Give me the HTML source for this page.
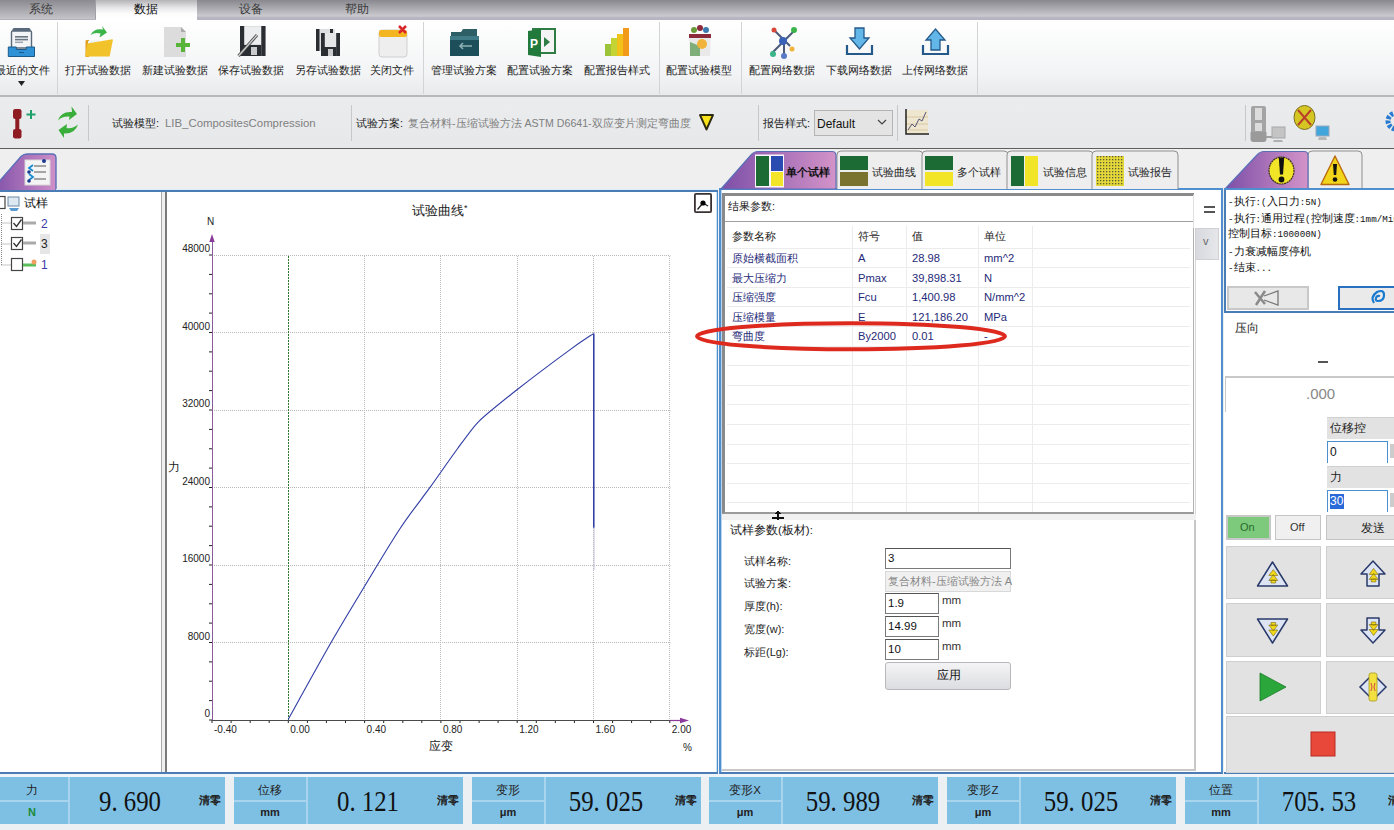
<!DOCTYPE html><html><head><meta charset="utf-8">
<style>
*{margin:0;padding:0;box-sizing:border-box}
html,body{width:1394px;height:830px;overflow:hidden;background:#efefef;font-family:"Liberation Sans",sans-serif;color:#222}
.a{position:absolute}
.t{position:absolute;white-space:nowrap;line-height:1}
#topbar{left:0;top:0;width:1394px;height:20px;background:linear-gradient(#88888e,#c9c9ce 80%,#b8b6c2 88%,#b4b2be)}
#ribbon{left:0;top:20px;width:1394px;height:77px;background:linear-gradient(#ffffff,#f3f4f5 70%,#e9eaec);border-bottom:2px solid #b9b9bb}
.sep{position:absolute;width:1px;background:#d4d4d6}
.rl{position:absolute;top:43px;font-size:11px;color:#222;white-space:nowrap;line-height:14px;transform:translateX(-50%)}
#tb2{left:0;top:97px;width:1394px;height:52px;background:linear-gradient(#eaecee,#e6e8ea);border-bottom:1px solid #5e5e5e;box-shadow:0 1px 0 #f4eed6}
#tabstrip{left:0;top:149px;width:1394px;height:42px;background:#efefef}
.j{display:inline-block;white-space:nowrap;text-align:justify;text-align-last:justify}
</style></head><body>
<div id="topbar" class="a">
  <div class="a" style="left:0;top:0;width:96px;height:19px;background:linear-gradient(#8a8a90,#c4c4c9);border-right:1px solid #a0a0a6"></div>
  <div class="a" style="left:96px;top:0;width:101px;height:20px;background:linear-gradient(#b4b4b8,#e8e8ea 40%,#fdfdfd 70%,#ffffff)"></div>
  <div class="t" style="left:29px;top:3px;font-size:12px;color:#3a3a3a"><span class="j" style="width: 24px;">系统</span></div>
  <div class="t" style="left:134px;top:3px;font-size:12px;color:#111"><span class="j" style="width: 24px;">数据</span></div>
  <div class="t" style="left:239px;top:3px;font-size:12px;color:#3a3a3a"><span class="j" style="width: 24px;">设备</span></div>
  <div class="t" style="left:345px;top:3px;font-size:12px;color:#3a3a3a"><span class="j" style="width: 24px;">帮助</span></div>
</div>
<div id="ribbon" class="a">
  <div class="sep" style="left:57px;top:2px;height:72px"></div>
  <div class="sep" style="left:423px;top:2px;height:72px"></div>
  <div class="sep" style="left:659px;top:2px;height:72px"></div>
  <div class="sep" style="left:741px;top:2px;height:72px"></div>
  <div class="sep" style="left:977px;top:2px;height:72px"></div>
  <!-- icons -->
  <svg class="a" style="left:0;top:0" width="980" height="45" viewBox="0 20 980 45">
    <!-- recent files tray -->
    <rect x="12.5" y="28" width="18" height="4" rx="1.5" fill="#5a6a7c"></rect>
    <rect x="11.5" y="31" width="20" height="17" rx="1" fill="#f2f4f6" stroke="#5a6a7c" stroke-width="1.4"></rect>
    <rect x="15" y="36" width="13" height="1.6" fill="#6a7682"></rect><rect x="15" y="38.8" width="13" height="1.6" fill="#6a7682"></rect><rect x="15" y="41.6" width="8" height="1.4" fill="#9aa4ae"></rect>
    <path d="M8.3 47 h8 v2.5 h10 v-2.5 h8.2 v9.5 h-26.2z" fill="#2f92d6" stroke="#1a5a8a" stroke-width="1"></path>
    <rect x="19" y="52" width="5" height="1" fill="#1a5a8a"></rect>
    <!-- open folder -->
    <path d="M85.5 41 q0 -1 1.5 -1 h2 v17 h-3.5z" fill="#e0a020"></path>
    <path d="M88 41 l12 -1 l-4 6 h-8z" fill="#eef2f6"></path>
    <path d="M87.3 43.6 L112.4 39.2 Q113 39.5 112.8 40.5 L109.6 56.6 H86.5 Q85.3 56.6 85.3 55.5z" fill="#f2c22a"></path>
    <path d="M90.5 35 Q94 28 103 29.5 L102 26 L107 32.5 L99.5 37.5 L100.5 33.5 Q95 32 90.5 35z" fill="#3cb54a"></path>
    <!-- new doc -->
    <path d="M164 27 h17 l5 5 v25 h-22z" fill="#dcdcdc"></path>
    <path d="M181 27 v5 h5z" fill="#aaa"></path>
    <rect x="176" y="43" width="14" height="4" fill="#59b43a"></rect><rect x="181" y="38" width="4" height="14" fill="#59b43a"></rect>
    <!-- save floppy -->
    <rect x="240" y="26" width="26" height="30" fill="#dcdee0"></rect>
    <rect x="244" y="27" width="17" height="17" fill="#eceeef"></rect>
    <rect x="240" y="26" width="4.2" height="30" fill="#2a2d31"></rect>
    <rect x="261.3" y="26" width="4.2" height="30" fill="#2a2d31"></rect>
    <rect x="244" y="45" width="17.3" height="11" fill="#2a2d31"></rect>
    <rect x="251" y="47" width="6" height="8" fill="#c8cacc"></rect>
    <path d="M238.5 56 L257 35" stroke="#444" stroke-width="3"></path>
    <path d="M238.5 56 L257 35" stroke="#c8c8c8" stroke-width="1.6"></path>
    <!-- save as -->
    <rect x="316" y="29" width="19" height="22" fill="#dcdee0"></rect>
    <rect x="316" y="29" width="3.5" height="22" fill="#2a2d31"></rect>
    <rect x="330" y="29" width="3" height="5" fill="#2a2d31"></rect>
    <rect x="321" y="33" width="19" height="23" fill="#e4e6e8"></rect>
    <rect x="321" y="33" width="3.8" height="23" fill="#2a2d31"></rect>
    <rect x="336.2" y="33" width="3.8" height="23" fill="#2a2d31"></rect>
    <rect x="324" y="47" width="12.5" height="9" fill="#2a2d31"></rect>
    <rect x="328" y="49" width="5" height="7" fill="#c8cacc"></rect>
    <!-- close file -->
    <rect x="379" y="30" width="28" height="27" rx="3" fill="#eeeeee" stroke="#cfcfcf"></rect>
    <rect x="379" y="30" width="28" height="7" rx="2" fill="#f3b520"></rect>
    <path d="M399 26 l7 7 M406 26 l-7 7" stroke="#d9262b" stroke-width="2.5"></path>
    <!-- manage scheme folder -->
    <path d="M451 32 h10 l2 -3 h14 v27 h-26z" fill="#2f5f66"></path>
    <path d="M450 36 h29 v20 h-29z" fill="#1c4f5a"></path>
    <rect x="450" y="36" width="29" height="4" fill="#3f7a86"></rect>
    <path d="M460 46 h12 M463 43 l-3 3 3 3" stroke="#8fb0b4" stroke-width="1.5" fill="none"></path>
    <!-- config scheme (project) -->
    <rect x="533" y="29" width="22" height="24" fill="#f4f4f4" stroke="#2f7d44" stroke-width="2"></rect>
    <path d="M528 31 l13 -2 v28 l-13 -2z" fill="#217a3c"></path>
    <text x="530" y="48" font-size="12" font-weight="bold" fill="#fff" font-family="Liberation Sans">P</text>
    <path d="M544 37 l6 5 -6 5z" fill="#2f7d44"></path>
    <!-- report style bars -->
    <rect x="605" y="44" width="6" height="12" fill="#9dc33b"></rect>
    <rect x="611" y="38" width="6" height="18" fill="#c5d435"></rect>
    <rect x="617" y="34" width="6" height="22" fill="#f2c21a"></rect>
    <rect x="623" y="28" width="6" height="28" fill="#f29a19"></rect>
    <!-- model bag -->
    <path d="M689 34 h22 l-1 22 h-20z" fill="#e9e9e9"></path>
    <path d="M689 34 h22 v4 h-22z" fill="#8b2a3a"></path>
    <circle cx="694" cy="30" r="3" fill="#6a9a3a"></circle><circle cx="700" cy="28" r="3" fill="#8b2a3a"></circle><circle cx="706" cy="30" r="3" fill="#3a7ab0"></circle>
    <path d="M690 42 l10 4 v10 h-10z" fill="#7fae7a"></path>
    <circle cx="702" cy="44" r="5" fill="#f2b33a"></circle>
    <!-- network -->
    <path d="M772 53 l22 -22 M775 31 l15 15 M784 41 l0 15" stroke="#4a5a78" stroke-width="2"></path>
    <circle cx="783" cy="41" r="4" fill="#3a63b8"></circle>
    <circle cx="794" cy="30" r="3" fill="#3cb44a"></circle><circle cx="774" cy="30" r="2.5" fill="#d9473a"></circle>
    <circle cx="773" cy="54" r="3" fill="#3cb48a"></circle><circle cx="784" cy="56" r="3" fill="#5a7ac8"></circle><circle cx="792" cy="49" r="2.5" fill="#f2b33a"></circle>
    <!-- download -->
    <path d="M847 45 v9 h25 v-9" stroke="#24598a" stroke-width="2.2" fill="none"></path>
    <path d="M855 28 h9 v10 h5 l-9.5 11 -9.5 -11 h5z" fill="#62b6e8" stroke="#24598a" stroke-width="1.3"></path>
    <!-- upload -->
    <path d="M923 45 v9 h25 v-9" stroke="#24598a" stroke-width="2.2" fill="none"></path>
    <path d="M931 50 h9 v-10 h5 l-9.5 -11 -9.5 11 h5z" fill="#62b6e8" stroke="#24598a" stroke-width="1.3"></path>
  </svg>
  <div class="rl" style="left:22px"><span class="j" style="width: 55px;">最近的文件</span></div>
  <svg class="a" style="left:18px;top:61px" width="8" height="6"><path d="M0 0h7l-3.5 5z" fill="#222"></path></svg>
  <div class="rl" style="left:98px"><span class="j" style="width: 66px;">打开试验数据</span></div>
  <div class="rl" style="left:175px"><span class="j" style="width: 66px;">新建试验数据</span></div>
  <div class="rl" style="left:251px"><span class="j" style="width: 66px;">保存试验数据</span></div>
  <div class="rl" style="left:328px"><span class="j" style="width: 66px;">另存试验数据</span></div>
  <div class="rl" style="left:392px"><span class="j" style="width: 44px;">关闭文件</span></div>
  <div class="rl" style="left:464px"><span class="j" style="width: 66px;">管理试验方案</span></div>
  <div class="rl" style="left:540px"><span class="j" style="width: 66px;">配置试验方案</span></div>
  <div class="rl" style="left:617px"><span class="j" style="width: 66px;">配置报告样式</span></div>
  <div class="rl" style="left:699px"><span class="j" style="width: 66px;">配置试验模型</span></div>
  <div class="rl" style="left:782px"><span class="j" style="width: 66px;">配置网络数据</span></div>
  <div class="rl" style="left:859px"><span class="j" style="width: 66px;">下载网络数据</span></div>
  <div class="rl" style="left:935px"><span class="j" style="width: 66px;">上传网络数据</span></div>
</div>
<div id="tb2" class="a">
  <svg class="a" style="left:0;top:0" width="100" height="50">
    <rect x="13" y="12" width="8.5" height="10" rx="2.2" fill="#8e1c22"></rect>
    <rect x="15.3" y="19" width="4" height="16" fill="#8e1c22"></rect>
    <rect x="13" y="32" width="8.5" height="9.5" rx="2.2" fill="#8e1c22"></rect>
    <path d="M26.5 17.5 h9 M31 13 v9" stroke="#1fa26a" stroke-width="2"></path>
    <path d="M58 23.5 Q61 14 72 15 L71.5 9.5 L77 17 L69 23 L69.5 19.5 Q62 19 58 23.5z" fill="#3aae3a"></path>
    <path d="M78 27.5 Q75 37 64 36.5 L64 41 L58.5 33 L67 27 L66.5 31 Q73 32 78 27.5z" fill="#3aae3a"></path>
  </svg>
  <div class="sep" style="left:88px;top:8px;height:36px;background:#c8c8c8"></div>
  <div class="t" style="left:112px;top:21px;font-size:11px;color:#222"><span class="j" style="width: 47.1px;">试验模型:</span></div>
  <div class="t" style="left:165px;top:21px;font-size:11.4px;color:#808080">LIB_CompositesCompression</div>
  <div class="sep" style="left:351px;top:8px;height:36px;background:#c8c8c8"></div>
  <div class="t" style="left:356px;top:21px;font-size:11px;color:#222"><span class="j" style="width: 47.1px;">试验方案:</span></div>
  <div class="t" style="left:408px;top:21px;font-size:10.6px;color:#808080"><span class="j" style="width: 282.6px;">复合材料-压缩试验方法 ASTM D6641-双应变片测定弯曲度</span></div>
  <svg class="a" style="left:698px;top:16px" width="16" height="18"><path d="M2 2 h13 l-6.5 14.5z" fill="#f8e418" stroke="#2e2a14" stroke-width="1.9" stroke-linejoin="round"></path></svg>
  <div class="sep" style="left:758px;top:8px;height:36px;background:#c8c8c8"></div>
  <div class="t" style="left:763px;top:21px;font-size:11px;color:#222"><span class="j" style="width: 47.1px;">报告样式:</span></div>
  <div class="a" style="left:814px;top:13px;width:79px;height:26px;background:#e4e4e4;border:1px solid #b4b4b4"></div>
  <div class="t" style="left:817px;top:21px;font-size:12px;color:#111">Default</div>
  <svg class="a" style="left:877px;top:22px" width="10" height="7"><path d="M1 1 l4 4 4 -4" stroke="#444" stroke-width="1.2" fill="none"></path></svg>
  <div class="sep" style="left:897px;top:8px;height:36px;background:#c8c8c8"></div>
  <svg class="a" style="left:902px;top:11px" width="28" height="28">
    <rect x="3" y="2" width="23" height="24" fill="#efe6cf"></rect>
    <path d="M3 9 h23 M3 16 h23 M3 22 h23" stroke="#d8c8a8" stroke-width="1"></path>
    <path d="M4 1 v25 h23" stroke="#222" stroke-width="1.5" fill="none"></path>
    <path d="M6 22 l4 -6 3 3 4 -8 3 2 4 -9" stroke="#557" stroke-width="1" fill="none"></path>
  </svg>
  <div class="sep" style="left:1245px;top:8px;height:36px;background:#c8c8c8"></div>
  <svg class="a" style="left:1248px;top:6px" width="150" height="42">
    <path d="M3 5 q0 -2 2 -2 h11 q2 0 2 2 v26 h-15z" fill="#a4a4a4"></path>
    <path d="M2.5 29 h16 v7 q0 3 -3 3 h-10 q-3 0 -3 -3z" fill="#9a9a9a"></path>
    <rect x="7" y="5" width="7" height="12" fill="#dcdcdc"></rect><rect x="7" y="20" width="7" height="8" fill="#dcdcdc"></rect>
    <path d="M18 34 h7" stroke="#a0a0a0" stroke-width="2"></path>
    <rect x="24" y="24" width="13" height="11" fill="#c4c4c4" stroke="#a8a8a8"></rect>
    <path d="M26 37 h8 l1 2 h-10z" fill="#b0b0b0"></path>
    <ellipse cx="56.5" cy="14.5" rx="10.5" ry="12" fill="#d6c624" stroke="#7a7020" stroke-width="1"></ellipse>
    <path d="M50 7 l13 15 M63 7 l-13 15" stroke="#b8402a" stroke-width="2"></path>
    <rect x="68" y="23" width="13" height="10" fill="#42a6dc" stroke="#9ab"></rect>
    <path d="M71 34 h7 l1 3 h-9z" fill="#b8b8b8"></path>
    <circle cx="148" cy="18" r="8" fill="none" stroke="#2a7ad0" stroke-width="5" stroke-dasharray="3 1.5"></circle>
  </svg>
</div>
<div id="tabstrip" class="a"></div>
<!-- left purple tab -->
<svg class="a" style="left:0;top:152px" width="60" height="40">
  <defs><linearGradient id="pg" x1="0" x2="1" y1="0" y2="0"><stop offset="0" stop-color="#7d4fa8"></stop><stop offset="1" stop-color="#cf8fc8"></stop></linearGradient></defs>
  <path d="M-10 40 L21 4.5 Q24 2 27 2 L52 2 Q56 2 56 6 L56 40z" fill="url(#pg)" stroke="#5a6fb8" stroke-width="1.4"></path>
  <rect x="25" y="8" width="25" height="25" fill="#f4f4f4" stroke="#d8d8d8"></rect>
  <path d="M34 14 h12 M34 20 h12 M34 27 h12" stroke="#8a8a8a" stroke-width="1.5"></path>
  <path d="M33 13 l-4 3 4 3 M29 22 l4 3 -4 3" stroke="#1a8ad0" stroke-width="1.8" fill="none"></path>
  <circle cx="29" cy="20" r="1.8" fill="#1a3a90"></circle><circle cx="29" cy="29" r="1.8" fill="#1a3a90"></circle><circle cx="44" cy="9" r="2" fill="#1a3a90"></circle>
</svg>
<div class="a" style="left:0;top:190px;width:164px;height:2px;background:#4a7db5"></div>
<!-- left tree panel -->
<div class="a" style="left:0;top:192px;width:162px;height:581px;background:#fff;border-right:1px solid #a8a8a8"></div>
<!-- chart panel -->
<div class="a" style="left:56px;top:189px;width:662px;height:1px;background:#dcecf8"></div><div class="a" style="left:56px;top:190px;width:662px;height:2px;background:#4a7db5"></div>
<div class="a" style="left:165px;top:192px;width:553px;height:581px;background:#fff;border-left:2px solid #7a7a7a;border-right:1.5px solid #4f8fd0;box-shadow:inset -1px 0 0 #c8e0f4"></div>
<div class="a" style="left:0;top:772px;width:718px;height:2px;background:#4a7db5"></div>
<!-- tree -->
<svg class="a" style="left:0;top:192px" width="60" height="85">
  <rect x="-6" y="4.5" width="11" height="12" fill="#fff" stroke="#444" stroke-width="1.2"></rect>
  <rect x="8" y="5" width="11" height="9" fill="#dde8f0" stroke="#6a8aa8"></rect>
  <path d="M9 16 h10 l-2 3 h-6z" fill="#5a9ad0"></path>
  <path d="M1.5 22 V73 M1.5 31 H11 M1.5 52 H11 M1.5 73 H11" stroke="#888" stroke-width="1" stroke-dasharray="1 1"></path>
  <rect x="11.5" y="25.5" width="11" height="12" fill="#fff" stroke="#444" stroke-width="1.2"></rect>
  <path d="M13.5 31 l3 3.5 5 -7" stroke="#333" stroke-width="1.3" fill="none"></path>
  <rect x="11.5" y="45.5" width="11" height="12" fill="#fff" stroke="#444" stroke-width="1.2"></rect>
  <path d="M13.5 51 l3 3.5 5 -7" stroke="#333" stroke-width="1.3" fill="none"></path>
  <rect x="11.5" y="66.5" width="11" height="12" fill="#fff" stroke="#444" stroke-width="1.2"></rect>
  <path d="M23 31 h13 M23 51 h13" stroke="#aaa" stroke-width="3"></path>
  <path d="M23 73 h13" stroke="#5abf5a" stroke-width="3"></path>
  <circle cx="34" cy="70" r="2.5" fill="#f0a060"></circle>
  <rect x="40" y="42" width="10" height="20" fill="#e6e6e6"></rect>
</svg>
<div class="t" style="left:24px;top:197px;font-size:12px;color:#111"><span class="j" style="width: 24px;">试样</span></div>
<div class="t" style="left:41px;top:218px;font-size:12px;color:#3a3aa8">2</div>
<div class="t" style="left:41px;top:238px;font-size:12px;color:#222">3</div>
<div class="t" style="left:41px;top:259px;font-size:12px;color:#3a3aa8">1</div>
<!-- chart --><svg class="a" style="left:0;top:0" width="720" height="780"><path d="M212 642.5 H670.5" stroke="#b8b8b8" stroke-width="1" stroke-dasharray="1 1"></path><path d="M212 565.5 H670.5" stroke="#b8b8b8" stroke-width="1" stroke-dasharray="1 1"></path><path d="M212 487.5 H670.5" stroke="#b8b8b8" stroke-width="1" stroke-dasharray="1 1"></path><path d="M212 410.5 H670.5" stroke="#b8b8b8" stroke-width="1" stroke-dasharray="1 1"></path><path d="M212 332.5 H670.5" stroke="#b8b8b8" stroke-width="1" stroke-dasharray="1 1"></path><path d="M212 255.5 H670.5" stroke="#b8b8b8" stroke-width="1" stroke-dasharray="1 1"></path><path d="M364.5 256 V720" stroke="#b8b8b8" stroke-width="1" stroke-dasharray="1 1"></path><path d="M440.5 256 V720" stroke="#b8b8b8" stroke-width="1" stroke-dasharray="1 1"></path><path d="M517.5 256 V720" stroke="#b8b8b8" stroke-width="1" stroke-dasharray="1 1"></path><path d="M593.5 256 V720" stroke="#b8b8b8" stroke-width="1" stroke-dasharray="1 1"></path><path d="M669.5 256 V720" stroke="#b8b8b8" stroke-width="1" stroke-dasharray="1 1"></path><path d="M288.5 256 V720" stroke="#2f7a2f" stroke-width="1" stroke-dasharray="2 1"></path><path d="M209 720.0h3 M209 700.6h3 M209 681.2h3 M209 661.9h3 M209 642.5h3 M209 623.1h3 M209 603.8h3 M209 584.4h3 M209 565.0h3 M209 545.6h3 M209 526.2h3 M209 506.9h3 M209 487.5h3 M209 468.1h3 M209 448.8h3 M209 429.4h3 M209 410.0h3 M209 390.6h3 M209 371.2h3 M209 351.9h3 M209 332.5h3 M209 313.1h3 M209 293.8h3 M209 274.4h3 M209 255.0h3 M212.0 720v3 M231.1 720v3 M250.2 720v3 M269.2 720v3 M288.3 720v3 M307.4 720v3 M326.4 720v3 M345.5 720v3 M364.6 720v3 M383.7 720v3 M402.8 720v3 M421.8 720v3 M440.9 720v3 M460.0 720v3 M479.1 720v3 M498.1 720v3 M517.2 720v3 M536.3 720v3 M555.3 720v3 M574.4 720v3 M593.5 720v3 M612.6 720v3 M631.6 720v3 M650.7 720v3 M669.8 720v3" stroke="#222" stroke-width="1"></path><path d="M212.5 720 V238" stroke="#8a5a9a" stroke-width="1"></path><path d="M209.3 242 L212 234 L214.7 242z" fill="#8a3a9a"></path><path d="M212 720.5 H670" stroke="#4a4a4a" stroke-width="1.2"></path><path d="M670 720.5 H682" stroke="#8a3a9a" stroke-width="1.2"></path><path d="M680 717.8 L689 720.5 L680 723.2z" fill="#8a3a9a"></path><g font-family="Liberation Sans" font-size="10" fill="#222"><text x="210" y="717.0" text-anchor="end">0</text><text x="210" y="639.5" text-anchor="end">8000</text><text x="210" y="562.0" text-anchor="end">16000</text><text x="210" y="484.5" text-anchor="end">24000</text><text x="210" y="407.0" text-anchor="end">32000</text><text x="210" y="329.5" text-anchor="end">40000</text><text x="210" y="252.0" text-anchor="end">48000</text><text x="214.0" y="733">-0.40</text><text x="290.3" y="733">0.00</text><text x="366.6" y="733">0.40</text><text x="442.9" y="733">0.80</text><text x="519.2" y="733">1.20</text><text x="595.5" y="733">1.60</text><text x="671.8" y="733">2.00</text><text x="207" y="225">N</text><text x="683" y="751">%</text></g><path d="M288.2 719.4 C295.2 706.8 317.6 666.0 330.2 644 C342.8 622.0 352.4 606.5 364 587.2 C375.6 568.0 389.1 545.2 400.1 528.5 C411.1 511.8 420.7 500.4 430.2 487.2 C439.7 473.9 449.3 459.9 457.3 449 C462.1 442.5 472.4 427.8 478.4 421.8 C484.4 415.8 508.6 396.4 517.6 389.3 C532.7 377.4 556.1 359.9 568.8 350.6 C581.4 341.3 589.4 336.4 593.5 333.6" stroke="#3440a6" stroke-width="1.15" fill="none" stroke-linejoin="round"></path><path d="M593.8 333.6 V527.8" stroke="#2c36a0" stroke-width="1.5"></path><path d="M594 528 V570" stroke="#c4c4dc" stroke-width="1"></path></svg>
<div class="t" style="left:412px;top:204px;font-size:13px;color:#222"><span class="j" style="width: 55.6px;">试验曲线<span style="font-size:9px;vertical-align:top">*</span></span></div>
<div class="t" style="left:168px;top:461px;font-size:12px;color:#222"><span class="j" style="width: 12px;">力</span></div>
<div class="t" style="left:429px;top:740px;font-size:12px;color:#222"><span class="j" style="width: 24px;">应变</span></div>
<svg class="a" style="left:694px;top:193px" width="18" height="20"><rect x="0.9" y="0.9" width="16.2" height="18.2" rx="1" fill="#fff" stroke="#3a3232" stroke-width="1.8"></rect><path d="M3.5 16.5 L8.5 10.5 M9 10 l5 3" stroke="#222" stroke-width="1.3" fill="none"></path><circle cx="9" cy="10" r="2.6" fill="#000"></circle></svg>
<!-- middle panel -->
<div class="a" style="left:719px;top:188px;width:504px;height:586px;background:#fff;border-left:2px solid #4f8fd0;border-right:2px solid #4f8fd0;border-bottom:2px solid #4a7db5;border-top:2px solid #4f8fd0;box-shadow:inset 1px 0 0 #b8d4ee"></div>
<div class="a" style="left:722px;top:193px;width:472px;height:321px;background:#fff;border-left:3px solid #8a8a8a;border-top:3px solid #8a8a8a;border-right:1px solid #b0b0b0;border-bottom:2px solid #9a9a9a"></div>
<div class="t" style="left:728px;top:201px;font-size:11px;color:#222"><span class="j" style="width: 47.1px;">结果参数:</span></div>
<div class="a" style="left:725px;top:221px;width:469px;height:1px;background:#a0a0a0"></div>
<div class="a" style="left:852px;top:226px;width:1px;height:286px;background:#ececec"></div><div class="a" style="left:906px;top:226px;width:1px;height:286px;background:#ececec"></div><div class="a" style="left:978px;top:226px;width:1px;height:286px;background:#ececec"></div><div class="a" style="left:1032px;top:226px;width:1px;height:286px;background:#ececec"></div><div class="a" style="left:727px;top:248px;width:463px;height:1px;background:#ececec"></div><div class="a" style="left:727px;top:267px;width:463px;height:1px;background:#ececec"></div><div class="a" style="left:727px;top:287px;width:463px;height:1px;background:#ececec"></div><div class="a" style="left:727px;top:306px;width:463px;height:1px;background:#ececec"></div><div class="a" style="left:727px;top:326px;width:463px;height:1px;background:#ececec"></div><div class="a" style="left:727px;top:346px;width:463px;height:1px;background:#ececec"></div><div class="a" style="left:727px;top:365px;width:463px;height:1px;background:#ececec"></div><div class="a" style="left:727px;top:385px;width:463px;height:1px;background:#ececec"></div><div class="a" style="left:727px;top:404px;width:463px;height:1px;background:#ececec"></div><div class="a" style="left:727px;top:424px;width:463px;height:1px;background:#ececec"></div><div class="a" style="left:727px;top:444px;width:463px;height:1px;background:#ececec"></div><div class="a" style="left:727px;top:463px;width:463px;height:1px;background:#ececec"></div><div class="a" style="left:727px;top:483px;width:463px;height:1px;background:#ececec"></div><div class="a" style="left:727px;top:502px;width:463px;height:1px;background:#ececec"></div><div class="t" style="left:732px;top:231px;font-size:11px;color:#222"><span class="j" style="width: 44px;">参数名称</span></div><div class="t" style="left:858px;top:231px;font-size:11px;color:#222"><span class="j" style="width: 22px;">符号</span></div><div class="t" style="left:912px;top:231px;font-size:11px;color:#222"><span class="j" style="width: 11px;">值</span></div><div class="t" style="left:984px;top:231px;font-size:11px;color:#222"><span class="j" style="width: 22px;">单位</span></div><div class="t" style="left:732px;top:253px;font-size:11.2px;color:#1f2a78"><span class="j" style="width: 66px;">原始横截面积</span></div><div class="t" style="left:858px;top:253px;font-size:11.2px;color:#1f2a78">A</div><div class="t" style="left:912px;top:253px;font-size:11.2px;color:#1f2a78">28.98</div><div class="t" style="left:984px;top:253px;font-size:11.2px;color:#1f2a78">mm^2</div><div class="t" style="left:732px;top:273px;font-size:11.2px;color:#1f2a78"><span class="j" style="width: 55px;">最大压缩力</span></div><div class="t" style="left:858px;top:273px;font-size:11.2px;color:#1f2a78">Pmax</div><div class="t" style="left:912px;top:273px;font-size:11.2px;color:#1f2a78">39,898.31</div><div class="t" style="left:984px;top:273px;font-size:11.2px;color:#1f2a78">N</div><div class="t" style="left:732px;top:292px;font-size:11.2px;color:#1f2a78"><span class="j" style="width: 44px;">压缩强度</span></div><div class="t" style="left:858px;top:292px;font-size:11.2px;color:#1f2a78">Fcu</div><div class="t" style="left:912px;top:292px;font-size:11.2px;color:#1f2a78">1,400.98</div><div class="t" style="left:984px;top:292px;font-size:11.2px;color:#1f2a78">N/mm^2</div><div class="t" style="left:732px;top:312px;font-size:11.2px;color:#1f2a78"><span class="j" style="width: 44px;">压缩模量</span></div><div class="t" style="left:858px;top:312px;font-size:11.2px;color:#1f2a78">E</div><div class="t" style="left:912px;top:312px;font-size:11.2px;color:#1f2a78">121,186.20</div><div class="t" style="left:984px;top:312px;font-size:11.2px;color:#1f2a78">MPa</div><div class="t" style="left:732px;top:331px;font-size:11.2px;color:#1f2a78"><span class="j" style="width: 33px;">弯曲度</span></div><div class="t" style="left:858px;top:331px;font-size:11.2px;color:#1f2a78">By2000</div><div class="t" style="left:912px;top:331px;font-size:11.2px;color:#1f2a78">0.01</div><div class="t" style="left:984px;top:331px;font-size:11.2px;color:#1f2a78">-</div>
<svg class="a" style="left:690px;top:318px" width="330" height="40"><ellipse cx="161" cy="18.3" rx="154" ry="13" fill="none" stroke="#de2a1e" stroke-width="4"></ellipse></svg>
<div class="a" style="left:1193px;top:195px;width:27px;height:33px;background:#fff;border-left:1px solid #e0e0e0"></div>
<div class="a" style="left:1204px;top:206px;width:11px;height:1.6px;background:#555"></div><div class="a" style="left:1204px;top:211px;width:11px;height:1.6px;background:#555"></div>
<div class="a" style="left:1195px;top:228px;width:24px;height:32px;background:linear-gradient(90deg,#d8d9de,#e6e7ea);border:1px solid #d0d0d4"></div>
<div class="t" style="left:1203px;top:236px;font-size:11px;color:#666">v</div>
<div class="a" style="left:1195px;top:260px;width:1px;height:254px;background:#d8d8d8"></div>
<!-- splitter -->
<div class="a" style="left:722px;top:514px;width:474px;height:6px;background:#f0f0f0"></div>
<svg class="a" style="left:771px;top:510px" width="14" height="16"><path d="M7 1 v14 M1 8 h12" stroke="#111" stroke-width="2"></path><path d="M4 4 l3 -3 3 3 M4 12 l3 3 3 -3" fill="#111" stroke="#111"></path></svg>
<div class="a" style="left:722px;top:520px;width:474px;height:251px;background:#fff;border-right:2px solid #c8c8c8;border-bottom:2px solid #c8c8c8"></div>
<div class="t" style="left:730px;top:525px;font-size:11.5px;color:#222"><span class="j" style="width: 82.9px;">试样参数(板材):</span></div>
<div class="t" style="left:744px;top:556px;font-size:11px;color:#222"><span class="j" style="width: 47.1px;">试样名称:</span></div>
<div class="t" style="left:744px;top:578px;font-size:11px;color:#222"><span class="j" style="width: 47.1px;">试验方案:</span></div>
<div class="t" style="left:744px;top:601px;font-size:11px;color:#222"><span class="j" style="width: 38.5px;">厚度(h):</span></div>
<div class="t" style="left:744px;top:624px;font-size:11px;color:#222"><span class="j" style="width: 40.4px;">宽度(w):</span></div>
<div class="t" style="left:744px;top:647px;font-size:11px;color:#222"><span class="j" style="width: 44.7px;">标距(Lg):</span></div>
<div class="a" style="left:885px;top:548px;width:126px;height:21px;background:#fff;border:1px solid #7a7a7a;border-top-color:#555"></div>
<div class="t" style="left:888px;top:553px;font-size:11.5px;color:#111">3</div>
<div class="a" style="left:885px;top:571px;width:126px;height:21px;background:#f0f0f0;border:1px solid #d8d8d8"></div>
<div class="t" style="left:888px;top:576px;font-size:11px;color:#888"><span class="j" style="width: 124.1px;">复合材料-压缩试验方法 A</span></div>
<div class="a" style="left:885px;top:593px;width:54px;height:21px;background:#fff;border:1px solid #7a7a7a;border-top-color:#555"></div>
<div class="t" style="left:888px;top:598px;font-size:11.5px;color:#111">1.9</div>
<div class="a" style="left:885px;top:616px;width:54px;height:21px;background:#fff;border:1px solid #7a7a7a;border-top-color:#555"></div>
<div class="t" style="left:888px;top:621px;font-size:11.5px;color:#111">14.99</div>
<div class="a" style="left:885px;top:639px;width:54px;height:21px;background:#fff;border:1px solid #7a7a7a;border-top-color:#555"></div>
<div class="t" style="left:888px;top:644px;font-size:11.5px;color:#111">10</div>
<div class="t" style="left:942px;top:595px;font-size:11.5px;color:#333">mm</div>
<div class="t" style="left:942px;top:618px;font-size:11.5px;color:#333">mm</div>
<div class="t" style="left:942px;top:641px;font-size:11.5px;color:#333">mm</div>
<div class="a" style="left:885px;top:662px;width:126px;height:28px;background:linear-gradient(#f4f4f6,#dcdde0);border:1px solid #b8b8bc;border-radius:3px"></div>
<div class="t" style="left:937px;top:670px;font-size:11.5px;color:#111"><span class="j" style="width: 24px;">应用</span></div>
<!-- middle tabs -->
<svg class="a" style="left:718px;top:149px" width="470" height="44">
  <defs><linearGradient id="pg2" x1="0" x2="1"><stop offset="0" stop-color="#7d4fa8"></stop><stop offset="1" stop-color="#d393c8"></stop></linearGradient></defs>
  <path d="M119 40 v-34 q0 -4 4 -4 h78 q4 0 4 4 v34" fill="#eeeeee" stroke="#8f8f8f"></path>
  <path d="M204 40 v-34 q0 -4 4 -4 h78 q4 0 4 4 v34" fill="#eeeeee" stroke="#8f8f8f"></path>
  <path d="M289 40 v-34 q0 -4 4 -4 h78 q4 0 4 4 v34" fill="#eeeeee" stroke="#8f8f8f"></path>
  <path d="M374 40 v-34 q0 -4 4 -4 h78 q4 0 4 4 v34" fill="#eeeeee" stroke="#8f8f8f"></path>
  <path d="M3 40 L33 6 Q36 2.5 40 2.5 L114 2.5 Q118 2.5 118 6.5 L118 40z" fill="url(#pg2)" stroke="#5a6fb8" stroke-width="1.2"></path>
  <!-- icons -->
  <rect x="37" y="5.5" width="29" height="33" fill="#fbf6fb"></rect><rect x="38" y="7" width="13" height="30" fill="#1d6b34"></rect>
  <rect x="53" y="7" width="12" height="15" fill="#2a4bb0"></rect>
  <rect x="53" y="23" width="12" height="14" fill="#f2e426"></rect>
  <rect x="122" y="7" width="28" height="14" fill="#1d6b34"></rect>
  <rect x="122" y="23" width="28" height="14" fill="#7a7330"></rect>
  <rect x="207" y="7" width="28" height="14" fill="#1d6b34"></rect>
  <rect x="207" y="23" width="28" height="14" fill="#f2e426"></rect>
  <rect x="293" y="7" width="13" height="30" fill="#1d6b34"></rect>
  <rect x="307" y="7" width="13" height="30" fill="#f2e426"></rect>
  <rect x="378" y="7" width="28" height="30" fill="#e4d838"></rect>
  <rect x="378" y="7" width="28" height="30" fill="url(#dots)"></rect>
  <defs><pattern id="dots" width="3" height="3" patternUnits="userSpaceOnUse"><rect x="1" y="1" width="1.3" height="1.3" fill="#5a5a3a"></rect></pattern></defs>
</svg>
<div class="t" style="left:786px;top:167px;font-size:11px;font-weight:bold;color:#111"><span class="j" style="width: 44px;">单个试样</span></div>
<div class="t" style="left:872px;top:167px;font-size:11px;color:#222"><span class="j" style="width: 44px;">试验曲线</span></div>
<div class="t" style="left:957px;top:167px;font-size:11px;color:#222"><span class="j" style="width: 44px;">多个试样</span></div>
<div class="t" style="left:1043px;top:167px;font-size:11px;color:#222"><span class="j" style="width: 44px;">试验信息</span></div>
<div class="t" style="left:1128px;top:167px;font-size:11px;color:#222"><span class="j" style="width: 44px;">试验报告</span></div>
<!-- right tabs -->
<svg class="a" style="left:1222px;top:149px" width="172" height="44">
  <path d="M86 40 v-34 q0 -4 4 -4 h46 q4 0 4 4 v34" fill="#eeeeee" stroke="#8f8f8f"></path>
  <path d="M3 40 L35 6 Q38 2.5 42 2.5 L82 2.5 Q86 2.5 86 6.5 L86 40z" fill="url(#pg2)" stroke="#5a6fb8" stroke-width="1.2"></path>
  <ellipse cx="59.5" cy="21.5" rx="12.5" ry="13.5" fill="#f2e426" stroke="#3a3020" stroke-width="1.2" stroke-dasharray="2 0.6"></ellipse>
  <path d="M56.8 8.5 h5.4 l-1.2 17 h-3z" fill="#111"></path><circle cx="59.5" cy="30.5" r="2.9" fill="#111"></circle>
  <path d="M113 7 l14 28.5 h-28z" fill="#f2d41a" stroke="#b86a10" stroke-width="1.4" stroke-linejoin="round"></path>
  <path d="M111 15 h4 l-0.8 11 h-2.4z" fill="#111"></path><circle cx="113" cy="30.5" r="2.3" fill="#111"></circle>
</svg>

<!-- right panel -->
<div class="a" style="left:1224px;top:188px;width:172px;height:586px;background:#fff;border-bottom:2px solid #4a7db5;border-top:2px solid #4f8fd0"></div>
<div class="a" style="left:1224px;top:190px;width:172px;height:123px;background:#fff;border-left:2px solid #4a7db5;border-bottom:2px solid #4a7db5"></div>
<div class="t" style="left:1228px;top:194.7px;font-size:11px;line-height:12px;color:#111"><span class="j" style="width: 93.7px;"><span style="font-family:'Liberation Mono',monospace;font-size:9.2px">-</span>执行<span style="font-family:'Liberation Mono',monospace;font-size:9.2px">:(</span>入口力<span style="font-family:'Liberation Mono',monospace;font-size:9.2px">:5N)</span></span></div><div class="t" style="left:1228px;top:211.6px;font-size:11px;line-height:12px;color:#111"><span class="j" style="width: 170.7px;"><span style="font-family:'Liberation Mono',monospace;font-size:9.2px">-</span>执行<span style="font-family:'Liberation Mono',monospace;font-size:9.2px">:</span>通用过程<span style="font-family:'Liberation Mono',monospace;font-size:9.2px">(</span>控制速度<span style="font-family:'Liberation Mono',monospace;font-size:9.2px">:1mm/Min</span></span></div><div class="t" style="left:1228px;top:226.7px;font-size:11px;line-height:12px;color:#111"><span class="j" style="width: 93.7px;">控制目标<span style="font-family:'Liberation Mono',monospace;font-size:9.2px">:100000N)</span></span></div><div class="t" style="left:1228px;top:244.5px;font-size:11px;line-height:12px;color:#111"><span class="j" style="width: 82.6px;"><span style="font-family:'Liberation Mono',monospace;font-size:9.2px">-</span>力衰减幅度停机</span></div><div class="t" style="left:1228px;top:260.5px;font-size:11px;line-height:12px;color:#111"><span class="j" style="width: 44.1px;"><span style="font-family:'Liberation Mono',monospace;font-size:9.2px">-</span>结束<span style="font-family:'Liberation Mono',monospace;font-size:9.2px">...</span></span></div>
<div class="a" style="left:1227px;top:286px;width:82px;height:24px;background:#e8e8e8;border:2px solid #c8c8c8"></div>
<svg class="a" style="left:1252px;top:287px" width="32" height="22"><path d="M3 5 l10 12 M13 4 l-9 14" stroke="#8a8a8a" stroke-width="2.5"></path><path d="M12 9 l14 -5 v14 l-14 -5" stroke="#777" stroke-width="1.3" fill="none"></path></svg>
<div class="a" style="left:1338px;top:286px;width:60px;height:24px;background:#eaeaea;border:2px solid #2a70c0"></div>
<svg class="a" style="left:1368px;top:288px" width="20" height="20"><path d="M6 15 q-4 -6 3 -11 q7 -3 7 3 q0 6 -6 6 q-3 0 -2 -3 q1 -3 4 -2" stroke="#1a7ad0" stroke-width="2.2" fill="none"></path></svg>
<div class="t" style="left:1235px;top:323px;font-size:11.5px;color:#222"><span class="j" style="width: 24px;">压向</span></div>
<div class="a" style="left:1318px;top:361px;width:10px;height:1.5px;background:#555"></div>
<div class="a" style="left:1225px;top:376px;width:175px;height:36px;background:#fff;border-top:2px solid #c8c8c8;border-left:1px solid #c8c8c8"></div>
<div class="t" style="left:1306px;top:386px;font-size:15px;color:#888">.000</div>
<div class="a" style="left:1327px;top:417px;width:70px;height:22px;background:#e2e2e2;border-top:1px solid #d0d0d0"></div>
<div class="t" style="left:1330px;top:422px;font-size:12px;color:#222"><span class="j" style="width: 36px;">位移控</span></div>
<div class="a" style="left:1327px;top:441px;width:61px;height:22px;background:#fff;border:1px solid #4a90d0;border-bottom:none"></div>
<div class="t" style="left:1330px;top:446px;font-size:12px;color:#111">0</div>
<div class="a" style="left:1327px;top:466px;width:70px;height:22px;background:#e2e2e2;border-top:1px solid #d0d0d0"></div>
<div class="t" style="left:1330px;top:471px;font-size:12px;color:#222"><span class="j" style="width: 12px;">力</span></div>
<div class="a" style="left:1327px;top:490px;width:61px;height:22px;background:#fff;border:1px solid #4a90d0;border-bottom:none"></div>
<div class="a" style="left:1330px;top:494px;width:14px;height:15px;background:#2a6ad8"></div>
<div class="t" style="left:1330px;top:495px;font-size:12px;color:#fff">30</div>
<div class="a" style="left:1390px;top:444px;width:4px;height:14px;background:#ccc"></div>
<div class="a" style="left:1390px;top:493px;width:4px;height:14px;background:#ccc"></div>
<div class="a" style="left:1226px;top:515px;width:45px;height:25px;background:#7dca7d;border:2px solid #c8c8c8"></div>
<div class="t" style="left:1240px;top:522px;font-size:11px;color:#2a6a2a">On</div>
<div class="a" style="left:1275px;top:515px;width:46px;height:25px;background:#f0f0f0;border:1px solid #c4c4c4"></div>
<div class="t" style="left:1290px;top:522px;font-size:11px;color:#333">Off</div>
<div class="a" style="left:1326px;top:515px;width:70px;height:25px;background:#e2e2e2;border:1px solid #c4c4c4"></div>
<div class="t" style="left:1361px;top:522px;font-size:12px;color:#222"><span class="j" style="width: 24px;">发送</span></div>
<div class="a" style="left:1226px;top:546px;width:95px;height:53px;background:#e2e2e2;border:1px solid #cfcfcf"></div>
<div class="a" style="left:1326px;top:546px;width:70px;height:53px;background:#e2e2e2;border:1px solid #cfcfcf"></div>
<div class="a" style="left:1226px;top:603px;width:95px;height:54px;background:#e2e2e2;border:1px solid #cfcfcf"></div>
<div class="a" style="left:1326px;top:603px;width:70px;height:54px;background:#e2e2e2;border:1px solid #cfcfcf"></div>
<div class="a" style="left:1226px;top:661px;width:95px;height:53px;background:#e2e2e2;border:1px solid #cfcfcf"></div>
<div class="a" style="left:1326px;top:661px;width:70px;height:53px;background:#e2e2e2;border:1px solid #cfcfcf"></div>
<div class="a" style="left:1226px;top:716px;width:170px;height:57px;background:#e2e2e2;border:1px solid #cfcfcf"></div>
<svg class="a" style="left:1221px;top:545px" width="173" height="228">
  <path d="M51.5 17 L66.5 41 H36.5z" fill="#dde4f4" stroke="#2a3a6a" stroke-width="1.5" stroke-linejoin="round"></path>
  
  <path d="M152 16 L164 29 H158 V41 H146 V29 H140z" fill="#dde4f4" stroke="#2a3a6a" stroke-width="1.5" stroke-linejoin="round"></path>
  
  <path d="M51.5 98 L66.5 74 H36.5z" fill="#dde4f4" stroke="#2a3a6a" stroke-width="1.5" stroke-linejoin="round"></path>
  
  <path d="M152 98 L164 85 H158 V73 H146 V85 H140z" fill="#dde4f4" stroke="#2a3a6a" stroke-width="1.5" stroke-linejoin="round"></path>
  
  <path d="M39 128 L65 142 L39 156z" fill="#2aa63a" stroke="#1a7a2a" stroke-width="0.8"></path>
  <path d="M152 129 L165 142 L152 155 L139 142z" fill="#dde4f4" stroke="#2a3a6a" stroke-width="1.5"></path>
  <rect x="148" y="128" width="8" height="28" rx="2" fill="#f2e040" stroke="#a89a20" stroke-width="0.8"></rect>
  <path d="M150 138 q2 4 0 8 M154 138 q-2 4 0 8" stroke="#d84a4a" stroke-width="1" fill="none"></path>
  <rect x="90" y="187" width="24" height="24" fill="#e8483a" stroke="#b82a20" stroke-width="1"></rect>
<path d="M50.0 35.0 L54.6 35.0 L54.6 38.0 L50.0 38.0z M52.3 29.5 L56.8 35.5 L47.8 35.5z M52.3 24.5 L56.8 30.5 L47.8 30.5z" fill="#f2d81a" stroke="#7a6a10" stroke-width="0.6" stroke-linejoin="round"></path><path d="M150.3 33.9 L154.9 33.9 L154.9 36.9 L150.3 36.9z M152.6 28.4 L157.1 34.4 L148.1 34.4z M152.6 23.4 L157.1 29.4 L148.1 29.4z" fill="#f2d81a" stroke="#7a6a10" stroke-width="0.6" stroke-linejoin="round"></path><path d="M50.0 80.5 L54.6 80.5 L54.6 77.5 L50.0 77.5z M52.3 86.0 L56.8 80.0 L47.8 80.0z M52.3 91.0 L56.8 85.0 L47.8 85.0z" fill="#f2d81a" stroke="#7a6a10" stroke-width="0.6" stroke-linejoin="round"></path><path d="M150.3 80.0 L154.9 80.0 L154.9 77.0 L150.3 77.0z M152.6 85.5 L157.1 79.5 L148.1 79.5z M152.6 90.5 L157.1 84.5 L148.1 84.5z" fill="#f2d81a" stroke="#7a6a10" stroke-width="0.6" stroke-linejoin="round"></path></svg>
<!-- status -->
<div class="a" style="left:0;top:774px;width:1394px;height:56px;background:#edf0f3"></div><div class="a" style="left:0;top:774px;width:1394px;height:3px;background:#eef4fa"></div>
<div class="a" style="left:-4px;top:777px;width:72px;height:47px;background:#7ec0e4"></div>
<div class="a" style="left:-4px;top:800px;width:72px;height:2px;background:#a8d4ee"></div>
<div class="a" style="left:68px;top:777px;width:2px;height:47px;background:#a8d4ee"></div>
<div class="a" style="left:70px;top:777px;width:155px;height:47px;background:#7ec0e4"></div>
<div class="t" style="left:-4px;top:785px;width:72px;text-align:center;font-size:11.5px;color:#222"><span class="j" style="width: 12px;">力</span></div>
<div class="t" style="left:-4px;top:807px;width:72px;text-align:center;font-size:11px;font-weight:bold;color:#1a8a3a">N</div>
<div class="t" style="left:70px;top:788px;width:120px;text-align:center;font-family:'Liberation Serif',serif;font-size:28.5px;color:#111;transform:scaleX(0.87)">9. 690</div>
<div class="t" style="left:199px;top:795px;font-size:11px;font-weight:bold;color:#222"><span class="j" style="width: 22px;">清零</span></div>
<div class="a" style="left:234px;top:777px;width:72px;height:47px;background:#7ec0e4"></div>
<div class="a" style="left:234px;top:800px;width:72px;height:2px;background:#a8d4ee"></div>
<div class="a" style="left:306px;top:777px;width:2px;height:47px;background:#a8d4ee"></div>
<div class="a" style="left:308px;top:777px;width:155px;height:47px;background:#7ec0e4"></div>
<div class="t" style="left:234px;top:785px;width:72px;text-align:center;font-size:11.5px;color:#222"><span class="j" style="width: 24px;">位移</span></div>
<div class="t" style="left:234px;top:807px;width:72px;text-align:center;font-size:11px;font-weight:bold;color:#222">mm</div>
<div class="t" style="left:308px;top:788px;width:120px;text-align:center;font-family:'Liberation Serif',serif;font-size:28.5px;color:#111;transform:scaleX(0.87)">0. 121</div>
<div class="t" style="left:437px;top:795px;font-size:11px;font-weight:bold;color:#222"><span class="j" style="width: 22px;">清零</span></div>
<div class="a" style="left:472px;top:777px;width:72px;height:47px;background:#7ec0e4"></div>
<div class="a" style="left:472px;top:800px;width:72px;height:2px;background:#a8d4ee"></div>
<div class="a" style="left:544px;top:777px;width:2px;height:47px;background:#a8d4ee"></div>
<div class="a" style="left:546px;top:777px;width:155px;height:47px;background:#7ec0e4"></div>
<div class="t" style="left:472px;top:785px;width:72px;text-align:center;font-size:11.5px;color:#222"><span class="j" style="width: 24px;">变形</span></div>
<div class="t" style="left:472px;top:807px;width:72px;text-align:center;font-size:11px;font-weight:bold;color:#222">μm</div>
<div class="t" style="left:546px;top:788px;width:120px;text-align:center;font-family:'Liberation Serif',serif;font-size:28.5px;color:#111;transform:scaleX(0.87)">59. 025</div>
<div class="t" style="left:675px;top:795px;font-size:11px;font-weight:bold;color:#222"><span class="j" style="width: 22px;">清零</span></div>
<div class="a" style="left:709px;top:777px;width:72px;height:47px;background:#7ec0e4"></div>
<div class="a" style="left:709px;top:800px;width:72px;height:2px;background:#a8d4ee"></div>
<div class="a" style="left:781px;top:777px;width:2px;height:47px;background:#a8d4ee"></div>
<div class="a" style="left:783px;top:777px;width:155px;height:47px;background:#7ec0e4"></div>
<div class="t" style="left:709px;top:785px;width:72px;text-align:center;font-size:11.5px;color:#222"><span class="j" style="width: 31.7px;">变形X</span></div>
<div class="t" style="left:709px;top:807px;width:72px;text-align:center;font-size:11px;font-weight:bold;color:#222">μm</div>
<div class="t" style="left:783px;top:788px;width:120px;text-align:center;font-family:'Liberation Serif',serif;font-size:28.5px;color:#111;transform:scaleX(0.87)">59. 989</div>
<div class="t" style="left:912px;top:795px;font-size:11px;font-weight:bold;color:#222"><span class="j" style="width: 22px;">清零</span></div>
<div class="a" style="left:947px;top:777px;width:72px;height:47px;background:#7ec0e4"></div>
<div class="a" style="left:947px;top:800px;width:72px;height:2px;background:#a8d4ee"></div>
<div class="a" style="left:1019px;top:777px;width:2px;height:47px;background:#a8d4ee"></div>
<div class="a" style="left:1021px;top:777px;width:155px;height:47px;background:#7ec0e4"></div>
<div class="t" style="left:947px;top:785px;width:72px;text-align:center;font-size:11.5px;color:#222"><span class="j" style="width: 31.1px;">变形Z</span></div>
<div class="t" style="left:947px;top:807px;width:72px;text-align:center;font-size:11px;font-weight:bold;color:#222">μm</div>
<div class="t" style="left:1021px;top:788px;width:120px;text-align:center;font-family:'Liberation Serif',serif;font-size:28.5px;color:#111;transform:scaleX(0.87)">59. 025</div>
<div class="t" style="left:1150px;top:795px;font-size:11px;font-weight:bold;color:#222"><span class="j" style="width: 22px;">清零</span></div>
<div class="a" style="left:1185px;top:777px;width:72px;height:47px;background:#7ec0e4"></div>
<div class="a" style="left:1185px;top:800px;width:72px;height:2px;background:#a8d4ee"></div>
<div class="a" style="left:1257px;top:777px;width:2px;height:47px;background:#a8d4ee"></div>
<div class="a" style="left:1259px;top:777px;width:155px;height:47px;background:#7ec0e4"></div>
<div class="t" style="left:1185px;top:785px;width:72px;text-align:center;font-size:11.5px;color:#222"><span class="j" style="width: 24px;">位置</span></div>
<div class="t" style="left:1185px;top:807px;width:72px;text-align:center;font-size:11px;font-weight:bold;color:#222">mm</div>
<div class="t" style="left:1259px;top:788px;width:120px;text-align:center;font-family:'Liberation Serif',serif;font-size:28.5px;color:#111;transform:scaleX(0.87)">705. 53</div>
<div class="t" style="left:1388px;top:795px;font-size:11px;font-weight:bold;color:#222"><span class="j" style="width: 22px;">清零</span></div>

</body></html>
